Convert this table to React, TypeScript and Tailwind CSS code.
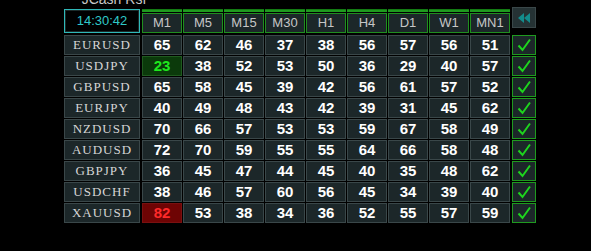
import React from "react";

const headers = ["M1", "M5", "M15", "M30", "H1", "H4", "D1", "W1", "MN1"];
const rows: [string, number[]][] = [
  ["EURUSD", [65, 62, 46, 37, 38, 56, 57, 56, 51]],
  ["USDJPY", [23, 38, 52, 53, 50, 36, 29, 40, 57]],
  ["GBPUSD", [65, 58, 45, 39, 42, 56, 61, 57, 52]],
  ["EURJPY", [40, 49, 48, 43, 42, 39, 31, 45, 62]],
  ["NZDUSD", [70, 66, 57, 53, 53, 59, 67, 58, 49]],
  ["AUDUSD", [72, 70, 59, 55, 55, 64, 66, 58, 48]],
  ["GBPJPY", [36, 45, 47, 44, 45, 40, 35, 48, 62]],
  ["USDCHF", [38, 46, 57, 60, 56, 45, 34, 39, 40]],
  ["XAUUSD", [82, 53, 38, 34, 36, 52, 55, 57, 59]],
];

function Check() {
  return (
    <svg width="16" height="16" viewBox="0 0 16 16">
      <path d="M2.5 8.5 L6.5 13 L14 2.5" fill="none" stroke="#1ed41e" strokeWidth="2" />
    </svg>
  );
}

function Chevrons() {
  return (
    <svg width="12" height="10" viewBox="0 0 12 10">
      <polygon points="6,0 6,10 0,5" fill="#138c8c" />
      <polygon points="12,0 12,10 6,5" fill="#138c8c" />
    </svg>
  );
}

export default function App() {
  return (
    <div
      className="w-[591px] h-[251px] bg-black overflow-hidden"
      style={{ fontFamily: '"Liberation Sans", Arial, sans-serif' }}
    >
      <div className="flex flex-col pl-[64px]">
        <div className="h-[9px] overflow-hidden w-[100px] flex justify-center">
          <div className="-mt-[9px] text-[14px] leading-[16px] text-[#c8c8c8] whitespace-nowrap">
            JCash Rsf
          </div>
        </div>
        {/* header row */}
        <div className="flex items-start">
          <div className="w-[76px] h-[24px] border border-[#2fb8b8] bg-black flex items-center justify-center">
            <div className="w-full h-full border border-[#1b2a2a] flex items-center justify-center text-[13px] text-[#2fc8c8]">
              14:30:42
            </div>
          </div>
          <div className="flex gap-px ml-[2px]">
            {headers.map((h) => (
              <div key={h} className="w-[40px] flex flex-col">
                <div className="h-[3px] bg-[#1f9a1f] border-t border-[#137a13]" />
                <div className="h-[20px] mt-px bg-[#1c2729] border border-[#1f8f1f] flex items-center justify-center text-[13px] text-[#c6c6c6]">
                  {h}
                </div>
              </div>
            ))}
          </div>
          <div className="ml-[2px] -mt-[2px] w-[24px] h-[21px] bg-[#253234] border border-[#3a4749] flex items-center justify-center">
            <Chevrons />
          </div>
        </div>
        {/* body */}
        <div className="flex flex-col gap-px mt-[2px]">
          {rows.map(([sym, vals]) => (
            <div key={sym} className="flex h-[20px]">
              <div
                className="w-[76px] h-[20px] bg-[#1c2729] border border-[#3a4749] flex items-center justify-center text-[13px] tracking-[1px] text-[#d6d6d6]"
                style={{ fontFamily: '"Liberation Serif", "Times New Roman", serif' }}
              >
                {sym}
              </div>
              <div className="flex gap-px ml-[2px]">
                {vals.map((v, i) => {
                  const green = v <= 25;
                  const red = v >= 80;
                  return (
                    <div
                      key={i}
                      className={
                        "w-[40px] h-[20px] border flex items-center justify-center text-[15px] font-bold " +
                        (green
                          ? "bg-[#0b3a0b] border-[#1f5a1f] text-[#1ee81e]"
                          : red
                          ? "bg-[#6e0404] border-[#7a1010] text-[#ff2a2a]"
                          : "bg-[#1c2729] border-[#3a4749] text-white")
                      }
                    >
                      {v}
                    </div>
                  );
                })}
              </div>
              <div className="ml-[2px] w-[24px] h-[20px] bg-[#1c2729] border border-[#1f9a1f] flex items-center justify-center">
                <Check />
              </div>
            </div>
          ))}
        </div>
      </div>
    </div>
  );
}
